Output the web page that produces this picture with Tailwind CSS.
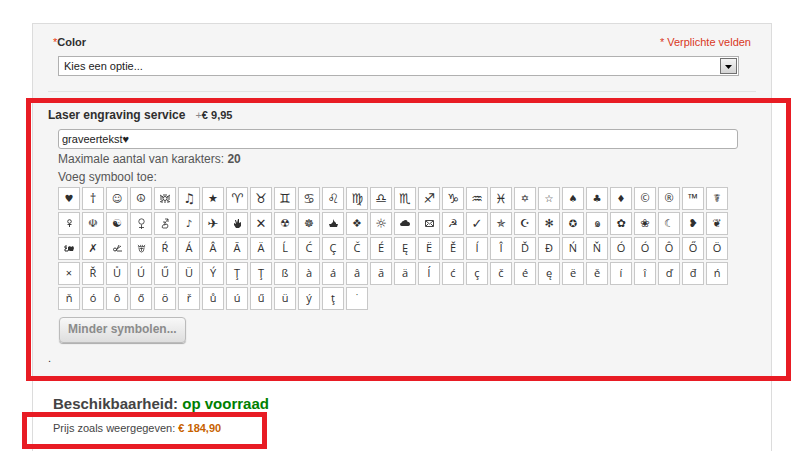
<!DOCTYPE html>
<html lang="nl">
<head>
    <meta charset="UTF-8">
    <meta name="viewport" content="width=device-width, initial-scale=1.0">
    <title>Laser engraving service</title>
    <script src="https://cdn.jsdelivr.net/npm/@tailwindcss/browser@4"></script>
</head>
<body class="bg-white font-['Liberation_Sans',Arial,sans-serif] text-[11px] leading-4 text-[#2f2f2f] overflow-hidden">
    <main class="ml-8 mr-[31px] mt-[23px] min-h-[428px] border-x border-t border-[#dcdcdc]">
        <form id="optionsForm">
            <!-- Color -->
            <div class="bg-[#f5f5f5] pt-[10px] pb-[6px]">
                <div class="flex justify-between px-5">
                    <label for="color" class="font-bold"><span class="text-[#eb340a] font-normal">*</span>Color</label>
                    <p class="text-[#d9381e]">* Verplichte velden</p>
                </div>
                <div class="relative ml-[25px] mr-8 mt-[6px]">
                    <select id="color" required class="block w-full h-5 appearance-none rounded-none border border-[#b0b0b0] bg-white pl-[5px] text-[#222]">
                        <option>Kies een optie...</option>
                    </select>
                    <span class="pointer-events-none absolute right-[2px] top-[2px] flex h-4 w-[17px] items-center justify-center border border-[#707070] bg-gradient-to-b from-[#f4f4f4] to-[#d4d4d4]">
                        <svg class="mt-[2px]" width="7" height="4" viewBox="0 0 7 4"><path d="M0 0h7L3.5 4z" fill="#000"/></svg>
                    </span>
                </div>
                <hr class="mx-[15px] mt-[15px] border-t border-[#e2e2e2]">
            </div>

            <!-- Laser engraving -->
            <section class="relative bg-[#f5f5f5] pt-[9px] pb-[15px]">
                <div class="pointer-events-none absolute inset-y-0 -left-[7px] -right-5 border-5 border-[#e81c24]"></div>
                <div class="flex gap-[10px] pl-[15px] font-bold">
                    <label for="engraving" class="text-xs leading-4">Laser engraving service</label>
                    <span><span class="font-normal text-[#888]">+</span>€ 9,95</span>
                </div>
                <div class="ml-[25px] mr-[33px] mt-[6px]">
                    <input id="engraving" type="text" maxlength="20" value="graveertekst♥" class="block w-full h-5 rounded-[3px] border border-[#b0b0b0] bg-white px-[3px] text-[#222] font-['Liberation_Sans','DejaVu_Sans',sans-serif]">
                    <p class="mt-px text-xs leading-[18px] text-[#555]">Maximale aantal van karakters: <strong>20</strong></p>
                    <p class="text-xs leading-[18px] text-[#555]">Voeg symbool toe:</p>
                    <div id="symbols" class="mt-px flex flex-wrap gap-[2px]"></div>
                    <button type="button" id="lessButton" class="mt-[7px] ml-[1px] h-[26px] rounded-[4px] border border-[#bbb] bg-gradient-to-b from-[#f8f8f8] to-[#dedede] px-2 pb-[2px] text-xs font-bold text-[#8b8b8b] shadow-[0_1px_1px_#aaa]">Minder symbolen...</button>
                </div>
                <p class="ml-[15px] mt-[7px]">.</p>
            </section>
        </form>

        <!-- Beschikbaarheid en prijs -->
        <div class="pl-5 pt-[14px]">
            <p class="text-[15px] leading-[17px] font-bold text-[#444]">Beschikbaarheid: <span class="text-[#008000]">op voorraad</span></p>
            <div class="-ml-[31px] w-[245px] border-5 border-[#e81c24] pt-[3px] pb-2 pl-[26px] text-[#444]">
                Prijs zoals weergegeven: <strong class="text-[#c76200]">€ 184,90</strong>
            </div>
        </div>
    </main>

    <script>
        const rows = [
            '♥ † ☺ ☮ knot ♫ ★ ♈ ♉ ♊ ♋ ♌ ♍ ♎ ♏ ♐ ♑ ♒ ♓ ✡ ☆ ♠ ♣ ♦ © ® ™ ☤',
            'neuter ☫ ☯ female male ♪ ✈ hand ✕ ☢ ☸ boat ❖ ☼ cloud envelope ☭ ✓ ✯ ☪ ✻ ✪ ๑ ✿ ❀ ☾ ❥ ❦',
            'leaf ✗ scissors flower Ŕ Á Â Ă Ä Ĺ Ć Ç Č É Ę Ë Ě Í Î Ď Đ Ń Ň Ó Ó Ô Ő Ö',
            '× Ř Ů Ú Ű Ü Ý Ţ Ţ ß à á â ă ä ĺ ć ç č é ę ë ě í î ď đ ń',
            'ň ó ô ő ö ř ů ú ű ü ý ţ ˙'
        ];

        // symbols that most fonts lack or draw differently
        const drawings = {
            knot: '<svg width="12" height="9" viewBox="0 0 12 9" fill="none" stroke="currentColor" stroke-width=".9"><path d="M1 1l3 2M11 1L8 3M1 3h3M8 3h3M1 5h2M9 5h2M1 8l3-2M11 8L8 6M2 8h2M8 8h2M4 1h4M5 8h2"/><circle cx="6" cy="4.500" r="2"/></svg>',
            neuter: '<svg width="7" height="8" viewBox="0 0 7 8" fill="none" stroke="currentColor" stroke-width=".9"><circle cx="3.500" cy="2.500" r="1.800"/><path d="M3.500 4.500V8M1.500 5.500h4"/></svg>',
            female: '<svg width="7" height="11" viewBox="0 0 7 11" fill="none" stroke="currentColor" stroke-width=".8"><circle cx="3.500" cy="3.500" r="2.700"/><path d="M3.500 6.500V11M1 9.500h5"/></svg>',
            male: '<svg width="8" height="11" viewBox="0 0 8 11" fill="none" stroke="currentColor" stroke-width=".8"><path d="M4 1h3v3M7 1L4 5M2 4h2v2L2 7M2 7Q0 10 2 10h4q2-2 0-4l-3 1"/></svg>',
            hand: '<svg width="7" height="9" viewBox="0 0 7 9" fill="currentColor"><path d="M1 1h1l1 3 1-4h1v4l2-1v4L5 9H2L0 6V4l2 1z"/></svg>',
            boat: '<svg width="9" height="8" viewBox="0 0 9 8" fill="currentColor"><path d="M4 0l1 2 2 2v1h2L8 8H1L0 5h2l2-2z"/></svg>',
            cloud: '<svg width="10" height="6" viewBox="0 0 12 7" fill="currentColor"><path d="M2 7Q0 7 0 5q0-1 2-2 0-2 2-2 1-1 3-1 2 0 2 2 3 0 3 3 0 2-2 2z"/></svg>',
            envelope: '<svg width="9" height="7" viewBox="0 0 9 7" fill="none" stroke="currentColor" stroke-width=".9"><path d="M.5.5h8v6h-8zM1 1l3.500 3L8 1M1 6l2-2M8 6L6 4"/></svg>',
            leaf: '<svg width="10" height="7" viewBox="0 0 10 7"><path d="M3 1H1v2h2M3 3L1 4v2h3l1-3" fill="none" stroke="currentColor"/><path d="M4 2l2-1 1 1 2-1 1 2-1 3H6L4 5z" fill="currentColor"/></svg>',
            scissors: '<svg width="9" height="8" viewBox="0 0 9 8" fill="none" stroke="currentColor" stroke-width=".9"><circle cx="2" cy="5.500" r="1.500"/><path d="M3 7l3-6M4 5l4-3M4 7h5"/></svg>',
            flower: '<svg width="9" height="9" viewBox="0 0 10 10" fill="none" stroke="currentColor" stroke-width=".8"><path d="M1 1l2 2M4 1v2M6 1v2M9 1L7 3M1 3h8M2 4l1 4q2 2 4 0l1-4M3 5h4M5 4v4"/></svg>'
        };

        const input = document.getElementById('engraving');
        const list = document.getElementById('symbols');

        rows.join(' ').split(' ').forEach((symbol) => {
            const button = document.createElement('button');
            button.type = 'button';
            button.className = "flex h-[23px] w-[22px] items-center justify-center border border-[#c8c8c8] bg-white pb-px leading-4 text-[#2f2f2f] font-['Open_Sans','DejaVu_Sans',sans-serif]";
            if ('♥☺♠♣♦✡☆♪✪'.includes(symbol)) {
                button.classList.add('text-[10px]');
            } else if ('†♫♈♉♊♋♌♍♎♏♐♑♒♓✈✕✓™☼'.includes(symbol)) {
                button.classList.add('text-[13px]');
            } else {
                button.classList.add('text-[11px]');
            }
            if (drawings[symbol]) {
                button.innerHTML = drawings[symbol];
                button.setAttribute('aria-label', symbol);
            } else {
                button.textContent = symbol;
                button.addEventListener('click', () => {
                    if (input.value.length < 20) input.value += symbol;
                });
            }
            list.appendChild(button);
        });

        document.getElementById('lessButton').addEventListener('click', () => {
            list.classList.toggle('hidden');
        });
    </script>
</body>
</html>
